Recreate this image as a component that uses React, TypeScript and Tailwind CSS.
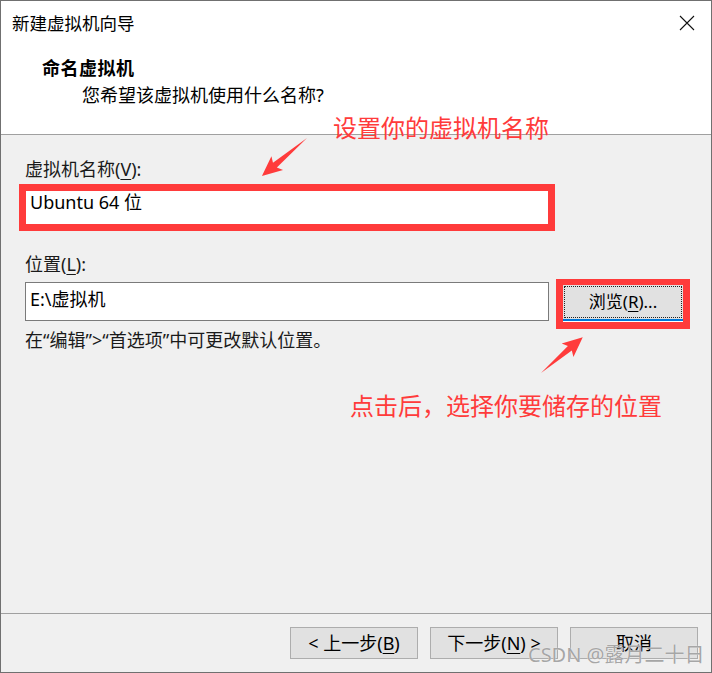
import React from "react";

const U = ({ children }: { children: React.ReactNode }) => (
  <span className="underline underline-offset-[3px] decoration-1">{children}</span>
);

export default function App() {
  return (
    <div className="relative w-[712px] h-[673px] bg-[#f0f0f0] border border-[#707070] flex flex-col overflow-hidden font-['Noto_Sans','Noto_Sans_CJK_SC',sans-serif] text-[18px] text-black">
      {/* Header */}
      <div className="shrink-0 h-[134px] bg-white border-b border-[#a0a0a0] flex flex-col">
        <div className="mt-[10px] h-[24px] flex items-center justify-between pl-[11px] pr-[16px]">
          <span className="leading-[24px] text-[17.5px]">新建虚拟机向导</span>
          <svg width="16" height="16" viewBox="0 0 16 16">
            <path d="M1 1 L15 15 M15 1 L1 15" stroke="#111" strokeWidth="1.1" fill="none" />
          </svg>
        </div>
        <div className="mt-[21px] pl-[41px] leading-[24px] font-bold tracking-[0.5px]">命名虚拟机</div>
        <div className="mt-[3px] pl-[81px] leading-[24px]">您希望该虚拟机使用什么名称?</div>
      </div>

      {/* Body */}
      <div className="flex-1 flex flex-col">
        <div className="mt-[24px] ml-[24px] h-[20px] leading-[20px] text-[#1a1a1a]">
          虚拟机名称(<U>V</U>):
        </div>
        <div className="mt-[5px] ml-[18px] w-[536px] h-[47px] border-[7px] border-[#ff3b3b] bg-white flex items-start pl-[4px]">
          <span className="leading-[22px]">Ubuntu 64 位</span>
        </div>
        <div className="mt-[23px] ml-[24px] h-[20px] leading-[20px] text-[#1a1a1a]">
          位置(<U>L</U>):
        </div>
        <div className="mt-[5px] h-[50px] flex items-start">
          <div className="ml-[24px] mt-[3px] w-[524px] h-[39px] border border-[#7a7a7a] bg-white pl-[4px] pt-[5px]">
            <span className="leading-[22px] block">E:\虚拟机</span>
          </div>
          <div className="ml-[7px] w-[134px] h-[50px] border-[7px] border-t-[6px] border-[#ff3b3b] flex flex-col">
            <div className="flex-1 bg-[#e1e1e1] p-px">
              <div className="h-full border border-dotted border-[#222] flex items-center justify-center text-[17px] leading-[22px]">
                浏览(<U>R</U>)...
              </div>
            </div>
            <div className="h-[2px] bg-[#0078d7]" />
            <div className="h-[1px] bg-white" />
          </div>
        </div>
        <div className="mt-[1px] ml-[24px] h-[20px] leading-[20px] text-[#1a1a1a]">
          在“编辑”&gt;“首选项”中可更改默认位置。
        </div>
      </div>

      {/* Footer */}
      <div className="shrink-0 h-[59px] border-t border-[#a0a0a0] flex justify-end items-start gap-[12px] pt-[13px] pr-[13px]">
        <div className="w-[128px] h-[32px] bg-[#e1e1e1] border border-[#adadad] flex items-center justify-center leading-[22px]">
          &lt; 上一步(<U>B</U>)
        </div>
        <div className="w-[128px] h-[32px] bg-[#e1e1e1] border border-[#adadad] flex items-center justify-center leading-[22px]">
          下一步(<U>N</U>) &gt;
        </div>
        <div className="w-[128px] h-[32px] bg-[#e1e1e1] border border-[#adadad] flex items-center justify-center leading-[22px]">
          取消
        </div>
      </div>

      {/* Annotations */}
      <svg className="absolute left-[-1px] top-[-1px] pointer-events-none" width="712" height="673" viewBox="0 0 712 673">
        <polygon points="0,0 42,-3 39,-9 59,0 39,9 42,3" fill="#ff3b3b" transform="translate(307 138) rotate(139.8)" />
        <polygon points="0,0 38,-3 35,-9 55,0 35,9 38,3" fill="#ff3b3b" transform="translate(541 373) rotate(-40.6)" />
      </svg>
      <div className="absolute left-[332px] top-[110px] text-[24px] leading-[32px] text-[#ff3b3b] whitespace-nowrap font-['Noto_Sans_CJK_SC',sans-serif]">
        设置你的虚拟机名称
      </div>
      <div className="absolute left-[349px] top-[388px] text-[24px] leading-[32px] text-[#ff3b3b] whitespace-nowrap font-['Noto_Sans_CJK_SC',sans-serif]">
        点击后，选择你要储存的位置
      </div>
      <div className="absolute left-[527px] top-[640px] text-[20px] leading-[28px] text-[#a6a6a6] whitespace-nowrap [text-shadow:0_0_1px_#ffffff]">
        CSDN @露月二十日
      </div>
    </div>
  );
}
